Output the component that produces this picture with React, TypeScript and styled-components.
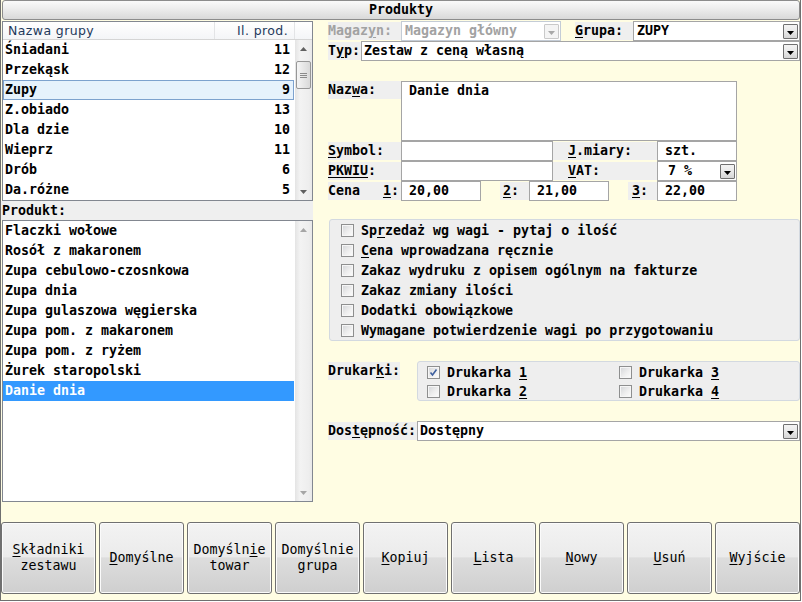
import * as React from 'react'
import styled, { createGlobalStyle } from 'styled-components'

const mono = `"DejaVu Sans Mono", "Liberation Mono", monospace`

const GlobalStyle = createGlobalStyle`
  html, body {
    margin: 0;
    padding: 0;
    background: #ffffff;
  }
`

const Window = styled.div`
  width: 801px;
  height: 601px;
  box-sizing: border-box;
  border: 1px solid #6f6f6f;
  border-top: none;
  background: #fffde3;
  display: flex;
  flex-direction: column;
  font-family: ${mono};
  font-size: 13.3px;
  font-weight: bold;
  color: #000;
`

const TitleBar = styled.div`
  height: 20px;
  box-sizing: border-box;
  margin-left: 1px;
  border: 1px solid #8c8c8c;
  border-radius: 3px;
  background: linear-gradient(#fafafa, #ececec 45%, #d9d9d9);
  text-align: center;
  line-height: 18px;
`

const Body = styled.div`
  display: flex;
  height: 482px;
`

const LeftPane = styled.div`
  width: 312px;
  display: flex;
  flex-direction: column;
`

const ListBox = styled.div<{ $h: number; $header?: boolean }>`
  margin-left: 1px;
  width: 311px;
  height: ${p => p.$h}px;
  box-sizing: border-box;
  border: 1px solid #828790;
  background: #fff;
  display: grid;
  grid-template-columns: 1fr 17px;
  grid-template-rows: ${p => (p.$header ? '18px 1fr' : '1fr')};
`

const ListHeader = styled.div`
  grid-column: 1 / -1;
  display: grid;
  grid-template-columns: 212px 80px 1fr;
  box-sizing: border-box;
  height: 18px;
  border-bottom: 1px solid #d5d5d5;
  background: linear-gradient(#ffffff, #f4f5f7);
  font-family: "DejaVu Sans", "Liberation Sans", sans-serif;
  font-size: 12.5px;
  letter-spacing: 0.4px;
  font-weight: normal;
  color: #1e395b;
`

const HeaderCell = styled.div<{ $right?: boolean }>`
  border-right: 1px solid #e3e4e6;
  line-height: 17px;
  padding: 0 6px 0 5px;
  white-space: nowrap;
  text-align: ${p => (p.$right ? 'right' : 'left')};
  &:last-child {
    border-right: none;
  }
`

const Rows = styled.div`
  display: flex;
  flex-direction: column;
`

const GroupRow = styled.div<{ $sel?: boolean }>`
  height: 20px;
  box-sizing: border-box;
  margin-right: 1px;
  display: flex;
  justify-content: space-between;
  padding: 0 3px 0 1px;
  line-height: 18px;
  border: 1px solid ${p => (p.$sel ? '#7da2ce' : 'transparent')};
  background: ${p => (p.$sel ? '#e6f2fc' : 'transparent')};
`

const ProductRow = styled.div<{ $sel?: boolean }>`
  height: 20px;
  margin-right: 1px;
  padding-left: 2px;
  line-height: 20px;
  white-space: pre;
  background: ${p => (p.$sel ? '#3399ff' : 'transparent')};
  color: ${p => (p.$sel ? '#fff' : '#000')};
`

const ScrollBar = styled.div`
  display: flex;
  flex-direction: column;
  background: linear-gradient(90deg, #e4e4e4, #f3f3f3 30%, #eeeeee 80%, #e8e8e8);
`

const ScrollArrow = styled.div`
  height: 17px;
  display: flex;
  align-items: center;
  justify-content: center;
`

const Thumb = styled.div`
  margin: 4px 1px 0 1px;
  height: 28px;
  box-sizing: border-box;
  border: 1px solid #979797;
  border-radius: 2px;
  background: linear-gradient(90deg, #f5f5f5, #e7e7e7 50%, #d9d9d9);
  display: flex;
  align-items: center;
  justify-content: center;
`

const Spacer = styled.div`
  flex: 1;
`

const PaneLabel = styled.div`
  height: 19px;
  line-height: 19px;
  background: #efefef;
  padding-left: 1px;
`

const RightPane = styled.div`
  flex: 1;
  padding: 1px 0 0 15px;
  display: flex;
  flex-direction: column;
`

const Row = styled.div<{ $h?: number; $mt?: number }>`
  display: flex;
  flex-shrink: 0;
  height: ${p => p.$h ?? 20}px;
  margin-top: ${p => p.$mt ?? 0}px;
`

const Label = styled.div<{ $w: number; $pl?: number; $dim?: boolean; $top?: boolean }>`
  width: ${p => p.$w}px;
  flex-shrink: 0;
  box-sizing: border-box;
  height: 18px;
  margin: ${p => (p.$top ? '0' : '1px 0')};
  padding-left: ${p => p.$pl ?? 0}px;
  line-height: 18px;
  background: #efefef;
  white-space: pre;
  color: ${p => (p.$dim ? '#a2a2a2' : '#000')};
`

const SplitLabel = styled(Label)`
  display: flex;
  justify-content: space-between;
  padding-right: 2px;
`

const Gap = styled.div<{ $w: number }>`
  width: ${p => p.$w}px;
  flex-shrink: 0;
`

const Field = styled.div<{ $w?: number; $h?: number; $pl?: number }>`
  ${p => (p.$w ? `width: ${p.$w}px; flex-shrink: 0;` : 'flex: 1;')}
  height: ${p => p.$h ?? 20}px;
  box-sizing: border-box;
  border: 1px solid #a5a5a5;
  background: #fff;
  padding-left: ${p => p.$pl ?? 7}px;
  line-height: 18px;
  white-space: pre;
`

const Select = styled.div<{ $w?: number; $pl?: number; $off?: boolean }>`
  ${p => (p.$w ? `width: ${p.$w}px; flex-shrink: 0;` : 'flex: 1;')}
  height: 20px;
  box-sizing: border-box;
  border: 1px solid ${p => (p.$off ? '#c4ccd6' : '#a5a5a5')};
  background: #fff;
  display: flex;
  align-items: center;
  padding-left: ${p => p.$pl ?? 2}px;
  color: ${p => (p.$off ? '#a2a2a2' : '#000')};
  white-space: pre;
`

const SelectText = styled.span`
  flex: 1;
  line-height: 18px;
`

const DropBtn = styled.span<{ $off?: boolean }>`
  width: 15px;
  height: 15px;
  margin-right: 1px;
  box-sizing: border-box;
  border: 1px solid ${p => (p.$off ? '#c9c9c9' : '#707070')};
  border-radius: 1px;
  background: ${p =>
    p.$off ? '#f4f4f4' : 'linear-gradient(#f4f4f4, #e9e9e9 50%, #d6d6d6)'};
  display: flex;
  align-items: center;
  justify-content: center;
  padding-top: 4px;
`

const CheckPanel = styled.div`
  flex-shrink: 0;
  height: 122px;
  margin: 18px 0 0 1px;
  box-sizing: border-box;
  border: 1px solid #d3d9e0;
  border-radius: 3px;
  background: #eeeeee;
  padding-left: 11px;
  display: flex;
  flex-direction: column;
`

const PrinterPanel = styled.div`
  flex: 1;
  height: 40px;
  box-sizing: border-box;
  border: 1px solid #d3d9e0;
  border-radius: 3px;
  background: #eeeeee;
  display: grid;
  grid-template-columns: 192px 1fr;
  grid-auto-rows: 19px;
  padding: 1px 0 0 9px;
`

const CheckRow = styled.div<{ $h?: number }>`
  height: ${p => p.$h ?? 20}px;
  display: flex;
  align-items: center;
  gap: 7px;
  white-space: pre;
`

const Box = styled.span`
  width: 13px;
  height: 13px;
  box-sizing: border-box;
  flex-shrink: 0;
  border: 1px solid #8e8f8f;
  background: linear-gradient(135deg, #d2d4d7, #eeeeee 55%, #fdfdfd);
  box-shadow: inset 0 0 0 1px #f6f6f6;
  display: flex;
  align-items: center;
  justify-content: center;
`

const ButtonBar = styled.div`
  display: flex;
  gap: 3px;
  padding: 20px 0 6px 0;
`

const Button = styled.button<{ $w: number }>`
  width: ${p => p.$w}px;
  height: 72px;
  flex-shrink: 0;
  box-sizing: border-box;
  border: 1px solid #707070;
  border-radius: 3px;
  background: linear-gradient(#f3f3f3, #ebebeb 48%, #dddddd 50%, #cfcfcf);
  box-shadow: inset 0 0 0 1px #fbfbfb;
  font-family: ${mono};
  font-size: 13.3px;
  font-weight: normal;
  color: #000;
  line-height: 16px;
  padding: 0;
  white-space: pre;
`

const U = styled.span`
  text-decoration: underline;
  text-underline-offset: 2px;
`

const Acc: React.FC<{ text: string; at?: number }> = ({ text, at = -1 }) =>
  at < 0 ? (
    <>{text}</>
  ) : (
    <>
      {text.slice(0, at)}
      <U>{text.slice(at, at + 1)}</U>
      {text.slice(at + 1)}
    </>
  )

const Arrow: React.FC<{ up?: boolean; color: string }> = ({ up, color }) => (
  <svg width="7" height="4" viewBox="0 0 7 4">
    <polygon points={up ? '0,4 7,4 3.5,0' : '0,0 7,0 3.5,4'} fill={color} />
  </svg>
)

const Check: React.FC<{ on?: boolean }> = ({ on }) => (
  <Box>
    {on && (
      <svg width="9" height="9" viewBox="0 0 9 9">
        <path d="M1.5 4.5 L3.5 7 L7.5 1.5" stroke="#3d5f9e" strokeWidth="1.6" fill="none" />
      </svg>
    )}
  </Box>
)

const Drop: React.FC<{ off?: boolean }> = ({ off }) => (
  <DropBtn $off={off}>
    <Arrow color={off ? '#a8a8a8' : '#000'} />
  </DropBtn>
)

const groups = [
  { name: 'Śniadani', count: 11 },
  { name: 'Przekąsk', count: 12 },
  { name: 'Zupy', count: 9 },
  { name: 'Z.obiado', count: 13 },
  { name: 'Dla dzie', count: 10 },
  { name: 'Wieprz', count: 11 },
  { name: 'Drób', count: 6 },
  { name: 'Da.różne', count: 5 },
]

const products = [
  'Flaczki wołowe',
  'Rosół z makaronem',
  'Zupa cebulowo-czosnkowa',
  'Zupa dnia',
  'Zupa gulaszowa węgierska',
  'Zupa pom. z makaronem',
  'Zupa pom. z ryżem',
  'Żurek staropolski',
  'Danie dnia',
]

const options = [
  { text: 'Sprzedaż wg wagi - pytaj o ilość', at: 2 },
  { text: 'Cena wprowadzana ręcznie', at: 0 },
  { text: 'Zakaz wydruku z opisem ogólnym na fakturze' },
  { text: 'Zakaz zmiany ilości' },
  { text: 'Dodatki obowiązkowe' },
  { text: 'Wymagane potwierdzenie wagi po przygotowaniu' },
]

const printers = [
  { n: '1', on: true },
  { n: '3' },
  { n: '2' },
  { n: '4' },
]

const buttons = [
  { lines: ['Składniki', 'zestawu'], at: 0 },
  { lines: ['Domyślne'], at: 0 },
  { lines: ['Domyślnie', 'towar'], at: 7 },
  { lines: ['Domyślnie', 'grupa'], at: -1 },
  { lines: ['Kopiuj'], at: 0 },
  { lines: ['Lista'], at: 0 },
  { lines: ['Nowy'], at: 0 },
  { lines: ['Usuń'], at: 0 },
  { lines: ['Wyjście'], at: 0 },
]

const App: React.FC = () => {
  return (
    <>
      <GlobalStyle />
      <Window>
        <TitleBar>Produkty</TitleBar>
        <Body>
          <LeftPane>
            <ListBox $h={180} $header style={{ marginTop: 1 }}>
              <ListHeader>
                <HeaderCell>Nazwa grupy</HeaderCell>
                <HeaderCell $right>Il. prod.</HeaderCell>
                <HeaderCell />
              </ListHeader>
              <Rows>
                {groups.map((g, i) => (
                  <GroupRow key={g.name} $sel={i === 2}>
                    <span>{g.name}</span>
                    <span>{g.count}</span>
                  </GroupRow>
                ))}
              </Rows>
              <ScrollBar>
                <ScrollArrow>
                  <Arrow up color="#606060" />
                </ScrollArrow>
                <Thumb>
                  <svg width="7" height="7" viewBox="0 0 7 7">
                    <path d="M0 1.5H7M0 3.5H7M0 5.5H7" stroke="#8a8a8a" strokeWidth="1" />
                  </svg>
                </Thumb>
                <Spacer />
                <ScrollArrow>
                  <Arrow color="#606060" />
                </ScrollArrow>
              </ScrollBar>
            </ListBox>
            <PaneLabel>Produkt:</PaneLabel>
            <ListBox $h={282}>
              <Rows>
                {products.map((p, i) => (
                  <ProductRow key={p} $sel={i === products.length - 1}>
                    {p}
                  </ProductRow>
                ))}
              </Rows>
              <ScrollBar>
                <ScrollArrow>
                  <Arrow up color="#a6a6a6" />
                </ScrollArrow>
                <Spacer />
                <ScrollArrow>
                  <Arrow color="#a6a6a6" />
                </ScrollArrow>
              </ScrollBar>
            </ListBox>
          </LeftPane>

          <RightPane>
            <Row>
              <Label $w={73} $dim>
                <Acc text="Magazyn:" at={5} />
              </Label>
              <Select $w={160} $pl={3} $off>
                <SelectText>Magazyn główny</SelectText>
                <Drop off />
              </Select>
              <Gap $w={14} />
              <Label $w={58}>
                <Acc text="Grupa:" at={0} />
              </Label>
              <Select $pl={3}>
                <SelectText>ZUPY</SelectText>
                <Drop />
              </Select>
            </Row>
            <Row>
              <Label $w={33}>
                <Acc text="Typ:" at={1} />
              </Label>
              <Select>
                <SelectText>Zestaw z ceną własną</SelectText>
                <Drop />
              </Select>
            </Row>

            <Row $h={60} $mt={20}>
              <Label $w={73} $top>
                <Acc text="Nazwa:" at={3} />
              </Label>
              <Field $w={336} $h={60}>
                Danie dnia
              </Field>
            </Row>
            <Row>
              <Label $w={73}>
                <Acc text="Symbol:" at={0} />
              </Label>
              <Field $w={152} />
              <Label $w={104} $pl={15}>
                <Acc text="J.miary:" at={0} />
              </Label>
              <Field $w={80}>szt.</Field>
            </Row>
            <Row>
              <Label $w={73}>
                <U>PKWIU</U>:
              </Label>
              <Field $w={152} />
              <Label $w={104} $pl={15}>
                <Acc text="VAT:" at={0} />
              </Label>
              <Select $w={80} $pl={10}>
                <SelectText>7 %</SelectText>
                <Drop />
              </Select>
            </Row>
            <Row>
              <SplitLabel $w={73}>
                <span>Cena</span>
                <span>
                  <Acc text="1:" at={0} />
                </span>
              </SplitLabel>
              <Field $w={80}>20,00</Field>
              <Gap $w={19} />
              <Label $w={29} $pl={3}>
                <Acc text="2:" at={0} />
              </Label>
              <Field $w={80}>21,00</Field>
              <Gap $w={19} />
              <Label $w={29} $pl={4}>
                <Acc text="3:" at={0} />
              </Label>
              <Field $w={80}>22,00</Field>
            </Row>

            <CheckPanel>
              {options.map(o => (
                <CheckRow key={o.text}>
                  <Check />
                  <span>
                    <Acc text={o.text} at={o.at} />
                  </span>
                </CheckRow>
              ))}
            </CheckPanel>

            <Row $h={40} $mt={20}>
              <Label $w={72} $top style={{ marginTop: 1 }}>
                <Acc text="Drukarki:" at={6} />
              </Label>
              <Gap $w={17} />
              <PrinterPanel>
                {printers.map(p => (
                  <CheckRow key={p.n} $h={19}>
                    <Check on={p.on} />
                    <span>
                      Drukarka <U>{p.n}</U>
                    </span>
                  </CheckRow>
                ))}
              </PrinterPanel>
            </Row>

            <Row $mt={20}>
              <Label $w={89}>
                <Acc text="Dostępność:" at={3} />
              </Label>
              <Select>
                <SelectText>Dostępny</SelectText>
                <Drop />
              </Select>
            </Row>
          </RightPane>
        </Body>

        <ButtonBar>
          {buttons.map((b, i) => (
            <Button key={b.lines.join(' ')} $w={i === 0 ? 95 : 85}>
              <Acc text={b.lines[0]} at={b.at} />
              {b.lines[1] && (
                <>
                  <br />
                  {b.lines[1]}
                </>
              )}
            </Button>
          ))}
        </ButtonBar>
      </Window>
    </>
  )
}

export default App
